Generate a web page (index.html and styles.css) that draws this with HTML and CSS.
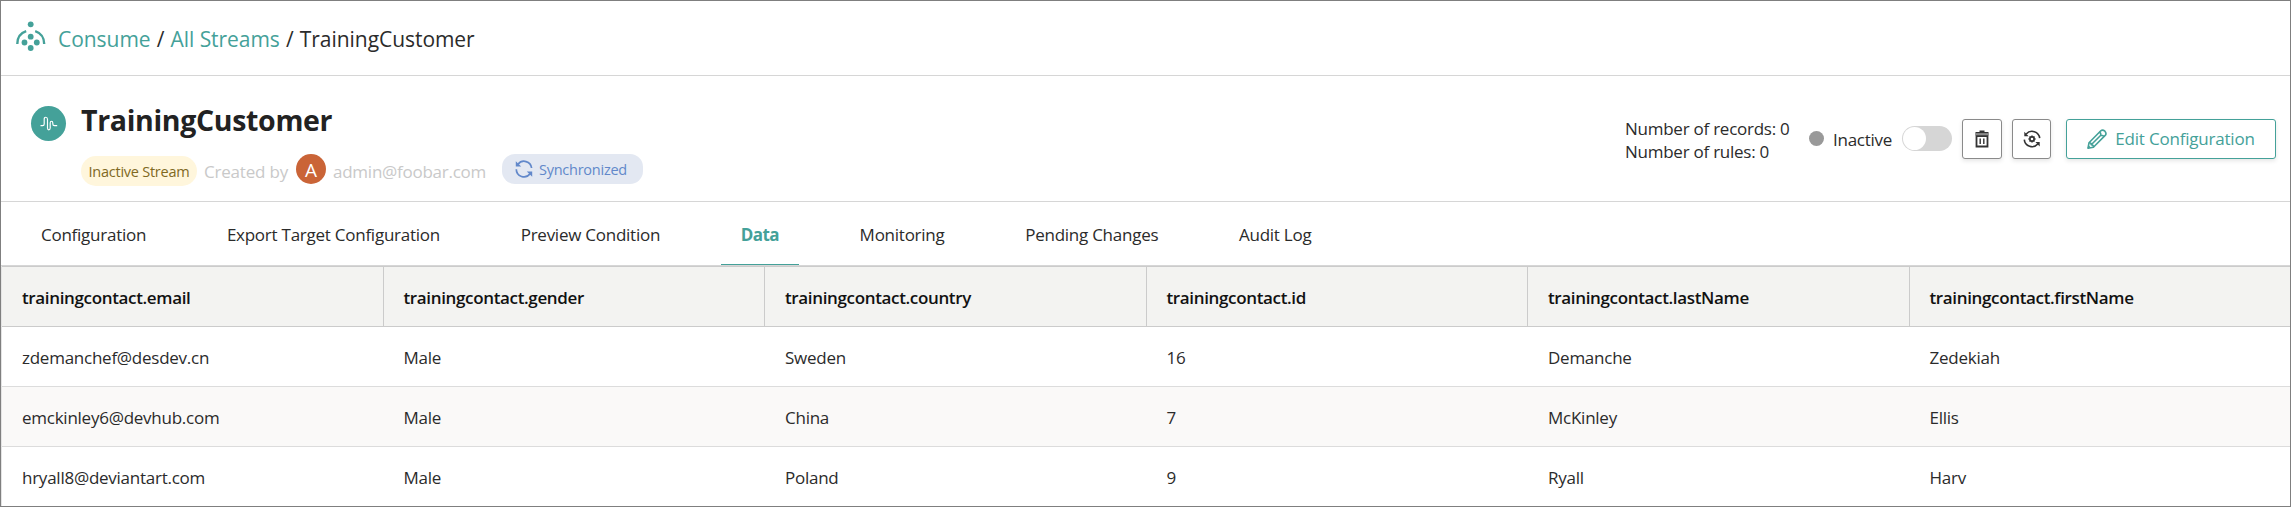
FILE: index.html
```html
<!DOCTYPE html>
<html lang="en">
<head>
<meta charset="utf-8">
<title>TrainingCustomer</title>
<link rel="stylesheet" href="styles.css">
</head>
<body>
<div class="app">
  <nav class="crumbs">
    <svg class="logo" viewBox="0 0 30 30" width="30" height="30">
      <g fill="#44a199"><circle cx="14.7" cy="3.3" r="2.9"/><circle cx="14.7" cy="15.7" r="2.9"/><circle cx="8.5" cy="21.5" r="2.9"/><circle cx="20.8" cy="21.5" r="2.9"/><circle cx="14.7" cy="27" r="2.9"/></g>
      <path d="M1.3 23C1.3 16.5 5 11.8 10.2 10.1M28.2 23C28.2 16.5 24.4 11.8 19.2 10.1" fill="none" stroke="#44a199" stroke-width="2.4"/>
    </svg>
    <a class="crumb">Consume</a><span class="slash">/</span><a class="crumb">All Streams</a><span class="slash">/</span><span>TrainingCustomer</span>
  </nav>

  <header class="head">
    <div class="stream-icon">
      <svg viewBox="0 0 18 16" width="18" height="16"><path d="M.5 9.6H2.6Q4.2 9.6 4.2 8V3.2Q4.2 1.2 5.8 1.2T7.5 3.2V12Q7.5 13.8 8.8 13.8T10.2 12V7Q10.2 5.2 11.5 5.2T12.8 7V8Q12.8 9.6 14.5 9.6H17.2" fill="none" stroke="#fff" stroke-width="1.15"/></svg>
    </div>
    <div class="info">
      <h1>TrainingCustomer</h1>
      <div class="meta">
        <span class="badge">Inactive Stream</span>
        <span class="muted created">Created by</span>
        <span class="avatar">A</span>
        <span class="muted mail">admin@foobar.com</span>
        <span class="sync">
          <svg viewBox="0 0 18 18" width="18" height="18"><g fill="none" stroke="#6288ca" stroke-width="1.7"><path d="M3 4.3A7.6 7.6 0 0 1 16.6 8"/><path d="M15 13.8A7.6 7.6 0 0 1 1.3 9.2"/></g><path d="M.8 1.2V6.4H6.2ZM17.2 16.8V11.4H11.8Z" fill="#6288ca"/></svg>
          Synchronized
        </span>
      </div>
    </div>
    <div class="actions">
      <div class="counts"><div>Number of records: 0</div><div>Number of rules: 0</div></div>
      <span class="dot"></span>
      <span class="state">Inactive</span>
      <span class="toggle"><span class="knob"></span></span>
      <button class="btn trash">
        <svg viewBox="0 0 14 18" width="14" height="18"><path d="M4.5.5h5V2H13.5V5.5H.5V2H4.5Z" fill="#333"/><path d="M.8 4.2h12.4" stroke="#8b8b8b" stroke-width="2.2"/><path d="M1.5 6.2H12.5V16.5H1.5Z" fill="none" stroke="#333" stroke-width="1.8"/><path d="M5.2 8.5V14M8.8 8.5V14" stroke="#333" stroke-width="1.4"/></svg>
      </button>
      <button class="btn reset">
        <svg viewBox="0 0 18 18" width="18" height="18"><g fill="none" stroke="#333" stroke-width="1.6"><path d="M3.2 4A7.7 7.7 0 0 1 16.7 8.2"/><path d="M14.8 14A7.7 7.7 0 0 1 1.3 9.6"/><circle cx="9" cy="9" r="2.1"/></g><path d="M1.3 1.8V6.2H5.6ZM16.7 16.4V12H12.4Z" fill="#333"/><path d="M9 5.4V6.9M9 11.1V12.6M5.4 9H6.9M11.1 9H12.6M6.5 6.5L7.5 7.5M10.5 10.5L11.5 11.5M11.5 6.5L10.5 7.5M7.5 10.5L6.5 11.5" stroke="#333" stroke-width="1.5"/></svg>
      </button>
      <button class="btn edit">
        <svg viewBox="0 0 20 20" width="20" height="20"><g fill="none" stroke="#44a199" stroke-width="1.6" stroke-linejoin="round"><path d="M1 19.2L2 13.8L13.8 1.8Q15.6 .2 17.9 2.2Q19.9 4.6 18.2 6.4L6.4 18.2Z"/><path d="M12.2 3.4Q13.8 3.2 13.8 6.2Q16.7 6.2 16.6 7.9M2 13.8Q4.2 13.4 4.2 15.8Q6.6 15.8 6.4 18.2M4.2 15.8L13.8 6.2M1 19.2L2.8 17.4"/></g></svg>
        Edit Configuration
      </button>
    </div>
  </header>

  <div class="tabs">
    <a class="tab">Configuration</a>
    <a class="tab">Export Target Configuration</a>
    <a class="tab">Preview Condition</a>
    <a class="tab active">Data</a>
    <a class="tab">Monitoring</a>
    <a class="tab">Pending Changes</a>
    <a class="tab">Audit Log</a>
  </div>

  <div class="table">
    <div class="row th"><div>trainingcontact.email</div><div>trainingcontact.gender</div><div>trainingcontact.country</div><div>trainingcontact.id</div><div>trainingcontact.lastName</div><div>trainingcontact.firstName</div></div>
    <div class="row"><div>zdemanchef@desdev.cn</div><div>Male</div><div>Sweden</div><div>16</div><div>Demanche</div><div>Zedekiah</div></div>
    <div class="row alt"><div>emckinley6@devhub.com</div><div>Male</div><div>China</div><div>7</div><div>McKinley</div><div>Ellis</div></div>
    <div class="row"><div>hryall8@deviantart.com</div><div>Male</div><div>Poland</div><div>9</div><div>Ryall</div><div>Harv</div></div>
  </div>
</div>
</body>
</html>
```
FILE: styles.css
```css
* { box-sizing: border-box; }
body {
  margin: 0;
  background: #fff;
  color: #2b2b2b;
  font: 17px/23px "Open Sans", "Noto Sans", sans-serif;
  letter-spacing: -0.25px;
  white-space: nowrap;
}
.app {
  height: 507px;
  border: 1px solid #7f7f7f;
  overflow: hidden;
  display: flex;
  flex-direction: column;
}

/* breadcrumb */
.crumbs {
  height: 75px;
  flex: none;
  display: flex;
  align-items: center;
  padding: 2px 0 0 15px;
  font-size: 21px;
  border-bottom: 1px solid #d6d6d6;
  letter-spacing: -0.05px;
}
.logo { margin: -7px 12px 0 0; }
.crumb { color: #44a199; }
.slash { width: 20px; text-align: center; }

/* stream header */
.head {
  height: 126px;
  flex: none;
  display: flex;
  align-items: flex-start;
  border-bottom: 1px solid #d6d6d6;
}
.stream-icon {
  width: 35px;
  height: 35px;
  margin: 30px 15px 0 30px;
  border-radius: 50%;
  background: #44a199;
  display: flex;
  align-items: center;
  justify-content: center;
}
h1 {
  margin: 24px 0 14px;
  font-size: 28.5px;
  line-height: 40px;
  font-weight: 700;
  letter-spacing: -0.33px;
  color: #222;
}
.meta { display: flex; align-items: flex-start; }
.badge {
  width: 116px;
  height: 30px;
  margin-top: 2px;
  border-radius: 15px;
  background: #fff6dc;
  color: #80691f;
  font-size: 14.5px;
  line-height: 31px;
  text-align: center;
}
.muted { color: #c9c9c9; line-height: 36px; }
.created { width: 85px; margin: 0 7px 0 7px; letter-spacing: -0.2px; }
.avatar {
  width: 30px;
  height: 30px;
  border-radius: 50%;
  background: #ca6437;
  color: #fff;
  font-size: 19px;
  line-height: 32px;
  text-align: center;
}
.mail { width: 154px; margin: 0 15px 0 7px; }
.sync {
  display: flex;
  align-items: center;
  gap: 6px;
  width: 141px;
  height: 30px;
  padding-left: 13px;
  border-radius: 13px;
  background: #e3e8f2;
  color: #6288ca;
  font-size: 14.5px;
}
.actions { display: flex; align-items: center; margin: 42px 14px 0 auto; height: 41px; }
.counts { width: 166px; margin: 2px 18px 0 0; }
.dot { width: 15px; height: 15px; border-radius: 50%; background: #999; }
.state { width: 60px; margin: 2px 9px 0 9px; }
.toggle {
  width: 50px;
  height: 25px;
  margin-right: 10px;
  padding: 1px;
  border-radius: 13px;
  background: #d6d6d6;
}
.knob { display: block; width: 23px; height: 23px; border-radius: 50%; background: #fff; }
.btn {
  height: 40px;
  padding: 0;
  border: 1px solid #8a8a8a;
  border-radius: 3px;
  background: #fff;
  box-shadow: 0 2px 4px rgba(0, 0, 0, .1);
  font: inherit;
  letter-spacing: inherit;
  display: flex;
  align-items: center;
  justify-content: center;
}
.trash { width: 40px; margin-right: 10px; }
.reset { width: 39px; margin-right: 15px; }
.edit {
  width: 210px;
  gap: 8px;
  border-color: #44a199;
  color: #44a199;
  letter-spacing: -0.2px;
}

/* tabs */
.tabs { height: 64px; flex: none; display: flex; gap: 40.7px; padding-left: 20px; border-bottom: 1px solid #d6d6d6; }
.tab { height: 63px; padding: 0 20px; line-height: 65px; }
.active { font-weight: 700; color: #44a199; border-bottom: 1px solid #44a199; letter-spacing: -0.6px; }

/* table */
.table { border-left: 1px solid #cbcbcb; }
.row {
  display: grid;
  grid-template-columns: repeat(6, 381.5px);
  height: 60px;
  line-height: 61px;
  border-bottom: 1px solid #dcdcdc;
}
.row > div { padding-left: 20px; }
.th {
  height: 61px;
  line-height: 62px;
  background: #f3f3f1;
  border-top: 1px solid #cbcbcb;
  border-bottom-color: #cbcbcb;
  color: #111;
  font-weight: 600;
  letter-spacing: -0.35px;
}
.table { border-left-color: #e4e4e4; }
.th > div { height: 59px; border-right: 1px solid #cbcbcb; }
.th > div:last-child { border-right: 0; }
.alt { background: #faf9f8; }
.row:last-child { border-bottom: 0; }
```
